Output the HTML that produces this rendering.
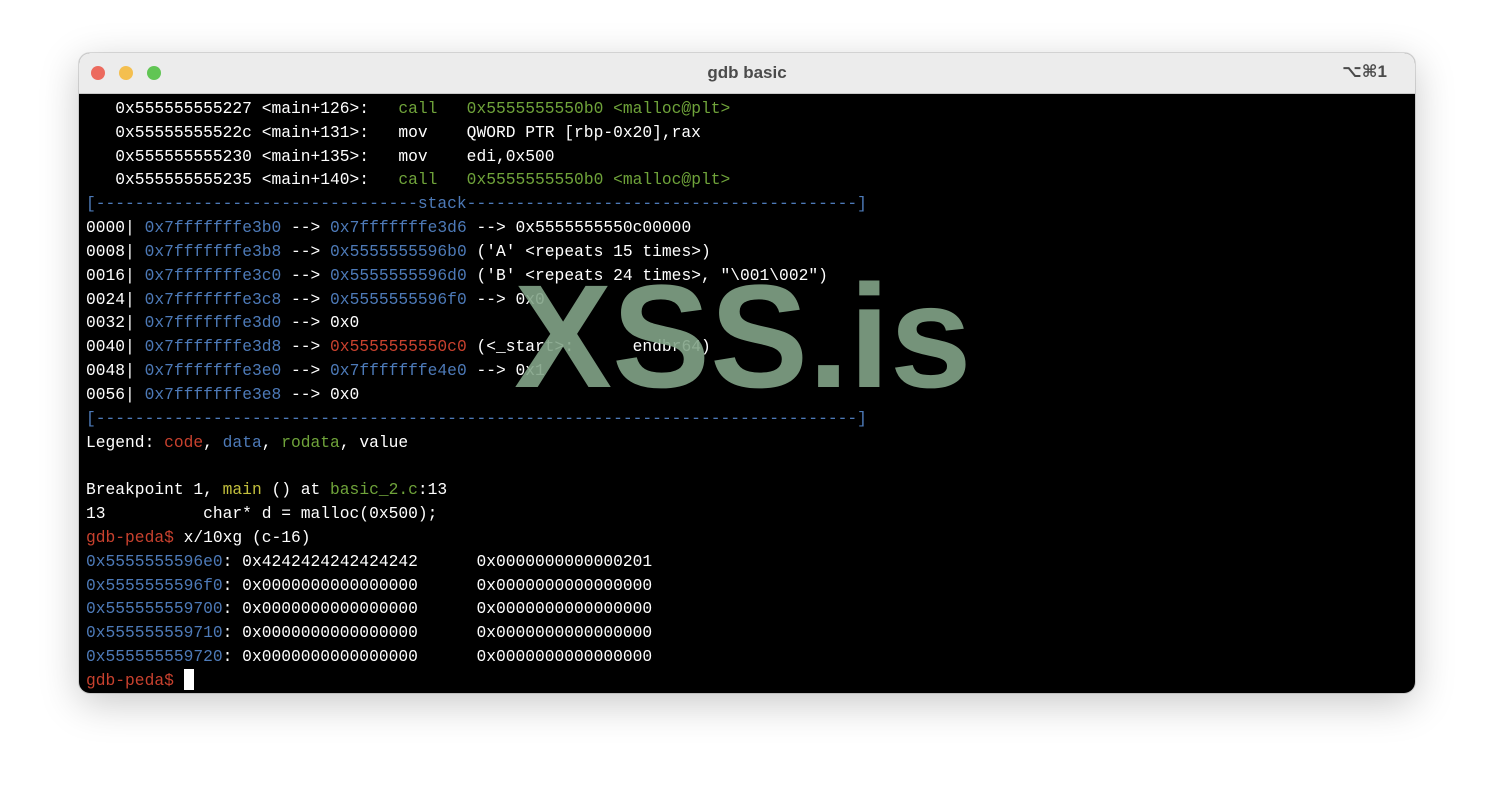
<!DOCTYPE html>
<html><head><meta charset="utf-8"><style>
html,body{margin:0;padding:0;background:#fff;width:1494px;height:798px;overflow:hidden;position:relative}
.win{position:absolute;left:79px;top:53px;width:1336px;height:640px;border-radius:11px;background:#000;box-shadow:0 10px 40px rgba(0,0,0,0.22),0 0 0 1px rgba(0,0,0,0.12);overflow:hidden}
.tb{position:absolute;left:0;top:0;width:100%;height:40px;background:#ececec;border-bottom:1px solid #c9c9c9}
.dot{position:absolute;top:13px;width:14px;height:14px;border-radius:50%}
.title{position:absolute;left:0;width:100%;top:10px;text-align:center;font:bold 17px "Liberation Sans",sans-serif;color:#4b4b4b}
.kb{position:absolute;right:28px;top:9px;font:bold 17px "Liberation Sans","DejaVu Sans",sans-serif;color:#4b4b4b}
pre{position:absolute;left:7px;top:44px;margin:0;font:16.27px/23.83px "Liberation Mono",monospace;color:#fff}
.g{color:#6fa33a}.b{color:#4d7ab8}.r{color:#c8412e}.y{color:#c3c03d}
.wm{position:absolute;left:514px;top:264px;font:bold 147px/1 "Liberation Sans",sans-serif;color:rgba(130,163,135,0.9)}
.cur{display:inline-block;width:10px;height:21px;background:#fff;vertical-align:-5px}
</style></head><body>
<div class="win">
<div class="tb"><div class="dot" style="left:12px;background:#ec6a5e"></div><div class="dot" style="left:40px;background:#f4bf4f"></div><div class="dot" style="left:68px;background:#61c554"></div>
<div class="title">gdb basic</div><div class="kb">⌥⌘1</div></div>
<pre>   0x555555555227 &lt;main+126&gt;:   <span class="g">call   0x5555555550b0 &lt;malloc@plt&gt;</span>
   0x55555555522c &lt;main+131&gt;:   mov    QWORD PTR [rbp-0x20],rax
   0x555555555230 &lt;main+135&gt;:   mov    edi,0x500
   0x555555555235 &lt;main+140&gt;:   <span class="g">call   0x5555555550b0 &lt;malloc@plt&gt;</span>
<span class="b">[---------------------------------stack----------------------------------------]</span>
0000| <span class="b">0x7fffffffe3b0</span> --&gt; <span class="b">0x7fffffffe3d6</span> --&gt; 0x5555555550c00000
0008| <span class="b">0x7fffffffe3b8</span> --&gt; <span class="b">0x5555555596b0</span> ('A' &lt;repeats 15 times&gt;)
0016| <span class="b">0x7fffffffe3c0</span> --&gt; <span class="b">0x5555555596d0</span> ('B' &lt;repeats 24 times&gt;, "\001\002")
0024| <span class="b">0x7fffffffe3c8</span> --&gt; <span class="b">0x5555555596f0</span> --&gt; 0x0
0032| <span class="b">0x7fffffffe3d0</span> --&gt; 0x0
0040| <span class="b">0x7fffffffe3d8</span> --&gt; <span class="r">0x5555555550c0</span> (&lt;_start&gt;:      endbr64)
0048| <span class="b">0x7fffffffe3e0</span> --&gt; <span class="b">0x7fffffffe4e0</span> --&gt; 0x1
0056| <span class="b">0x7fffffffe3e8</span> --&gt; 0x0
<span class="b">[------------------------------------------------------------------------------]</span>
Legend: <span class="r">code</span>, <span class="b">data</span>, <span class="g">rodata</span>, value

Breakpoint 1, <span class="y">main</span> () at <span class="g">basic_2.c</span>:13
13          char* d = malloc(0x500);
<span class="r">gdb-peda$</span> x/10xg (c-16)
<span class="b">0x5555555596e0</span>: 0x4242424242424242      0x0000000000000201
<span class="b">0x5555555596f0</span>: 0x0000000000000000      0x0000000000000000
<span class="b">0x555555559700</span>: 0x0000000000000000      0x0000000000000000
<span class="b">0x555555559710</span>: 0x0000000000000000      0x0000000000000000
<span class="b">0x555555559720</span>: 0x0000000000000000      0x0000000000000000
<span class="r">gdb-peda$</span> <span class="cur"></span></pre>
</div>
<div class="wm">XSS.is</div>
</body></html>
